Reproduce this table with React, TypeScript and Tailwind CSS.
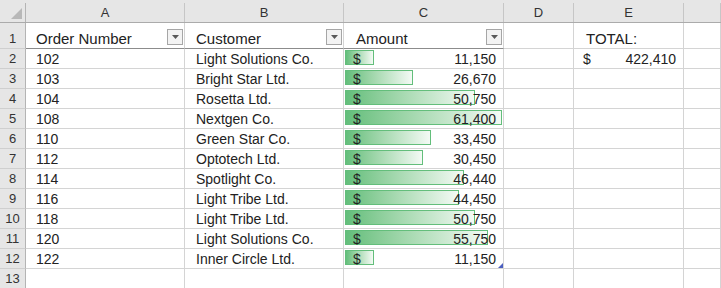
const orders = [
  { id: 102, customer: "Light Solutions Co.", amount: 11150 },
  { id: 103, customer: "Bright Star Ltd.", amount: 26670 },
  { id: 104, customer: "Rosetta Ltd.", amount: 50750 },
  { id: 108, customer: "Nextgen Co.", amount: 61400 },
  { id: 110, customer: "Green Star Co.", amount: 33450 },
  { id: 112, customer: "Optotech Ltd.", amount: 30450 },
  { id: 114, customer: "Spotlight Co.", amount: 46440 },
  { id: 116, customer: "Light Tribe Ltd.", amount: 44450 },
  { id: 118, customer: "Light Tribe Ltd.", amount: 50750 },
  { id: 120, customer: "Light Solutions Co.", amount: 55750 },
  { id: 122, customer: "Inner Circle Ltd.", amount: 11150 },
];

const maxAmount = Math.max(...orders.map((o) => o.amount));
const BAR_MAX = 157;

const fmt = (n: number) => n.toLocaleString("en-US");

const cell = "h-[20px] border-r border-b border-[#d4d4d4]";
const rowHead =
  "h-[20px] bg-[#e6e6e6] border-r border-r-[#b4b4b4] border-b border-b-[#cfcfcf] flex items-end justify-center pb-px leading-[16px] text-[13px] text-[#333]";

const FilterButton = () => (
  <div className="mb-[3px] mr-px flex h-[16px] w-[16px] shrink-0 items-center justify-center border border-[#a6a6a6] bg-[#f3f3f3]">
    <svg width="7" height="4" viewBox="0 0 7 4">
      <polygon points="0,0 7,0 3.5,4" fill="#595959" />
    </svg>
  </div>
);

const ColHead = ({ label }: { label?: string }) => (
  <div className="h-[23px] border-b border-[#ababab] bg-[#e6e6e6] pt-[3px]">
    <div className="flex h-full items-center justify-center border-r border-[#c6c6c6] text-[13px] text-[#333]">
      {label}
    </div>
  </div>
);

export default function App() {
  return (
    <div className="h-[288px] w-[721px] overflow-hidden bg-white font-['Liberation_Sans',Arial,sans-serif] text-[#222]">
      <div className="grid grid-cols-[26px_159px_159px_160px_70px_110px_1fr]">
        {/* column headers */}
        <div className="h-[23px] border-b border-[#ababab] bg-[#e6e6e6] pt-[3px]">
          <div className="flex h-full items-end justify-end border-r border-[#b4b4b4] pr-[3px] pb-[3px]">
            <svg width="11" height="11" viewBox="0 0 11 11">
              <polygon points="11,0 11,11 0,11" fill="#b8b8b8" />
            </svg>
          </div>
        </div>
        <ColHead label="A" />
        <ColHead label="B" />
        <ColHead label="C" />
        <ColHead label="D" />
        <ColHead label="E" />
        <ColHead />

        {/* row 1: table header */}
        <div className="flex h-[26px] items-end justify-center border-r border-r-[#b4b4b4] border-b border-b-[#cfcfcf] bg-[#e6e6e6] pb-px text-[13px] leading-[16px] text-[#333]">
          1
        </div>
        <div className="flex h-[26px] items-end justify-between border-r border-r-[#d4d4d4] border-b border-b-[#8c8c8c] pl-[10px] text-[15px] leading-[18px]">
          <span>Order Number</span>
          <FilterButton />
        </div>
        <div className="flex h-[26px] items-end justify-between border-r border-r-[#d4d4d4] border-b border-b-[#8c8c8c] pl-[11px] text-[15px] leading-[18px]">
          <span>Customer</span>
          <FilterButton />
        </div>
        <div className="flex h-[26px] items-end justify-between border-r border-r-[#d4d4d4] border-b border-b-[#8c8c8c] pl-[12px] text-[15px] leading-[18px]">
          <span>Amount</span>
          <FilterButton />
        </div>
        <div className="h-[26px] border-r border-b border-[#d4d4d4]" />
        <div className="flex h-[26px] items-end border-r border-b border-[#d4d4d4] pl-[12px] text-[15px] leading-[18px]">
          TOTAL:
        </div>
        <div className="h-[26px] border-r border-b border-[#d4d4d4]" />

        {/* data rows */}
        {orders.map((o, i) => (
          <div key={o.id} className="contents">
            <div className={rowHead}>{i + 2}</div>
            <div className={`${cell} flex items-end pl-[10px] pb-px text-[14px] leading-[16px]`}>
              {o.id}
            </div>
            <div className={`${cell} flex items-end pl-[11px] pb-px text-[14px] leading-[16px]`}>
              {o.customer}
            </div>
            <div className={`${cell} relative`}>
              <div
                className="absolute left-px top-px h-[15px] border border-[#63be7b] bg-linear-to-r from-[#63be7b] to-[#f4faf5]"
                style={{ width: Math.round((o.amount / maxAmount) * BAR_MAX) }}
              />
              <div className="relative flex h-full items-end justify-between pl-[9px] pr-[7px] pb-px text-[14px] leading-[16px]">
                <span>$</span>
                <span>{fmt(o.amount)}</span>
              </div>
              {i === orders.length - 1 && (
                <svg
                  className="absolute right-0 bottom-0"
                  width="5"
                  height="5"
                  viewBox="0 0 5 5"
                >
                  <polygon points="5,0 5,5 0,5" fill="#4b5fc0" />
                </svg>
              )}
            </div>
            <div className={cell} />
            {i === 0 ? (
              <div className={`${cell} flex items-end justify-between pl-[9px] pr-[7px] pb-px text-[14px] leading-[16px]`}>
                <span>$</span>
                <span>{fmt(orders.reduce((s, r) => s + r.amount, 0))}</span>
              </div>
            ) : (
              <div className={cell} />
            )}
            <div className={cell} />
          </div>
        ))}

        {/* row 13 */}
        <div className={rowHead}>13</div>
        <div className={cell} />
        <div className={cell} />
        <div className={cell} />
        <div className={cell} />
        <div className={cell} />
        <div className={cell} />
      </div>
    </div>
  );
}
